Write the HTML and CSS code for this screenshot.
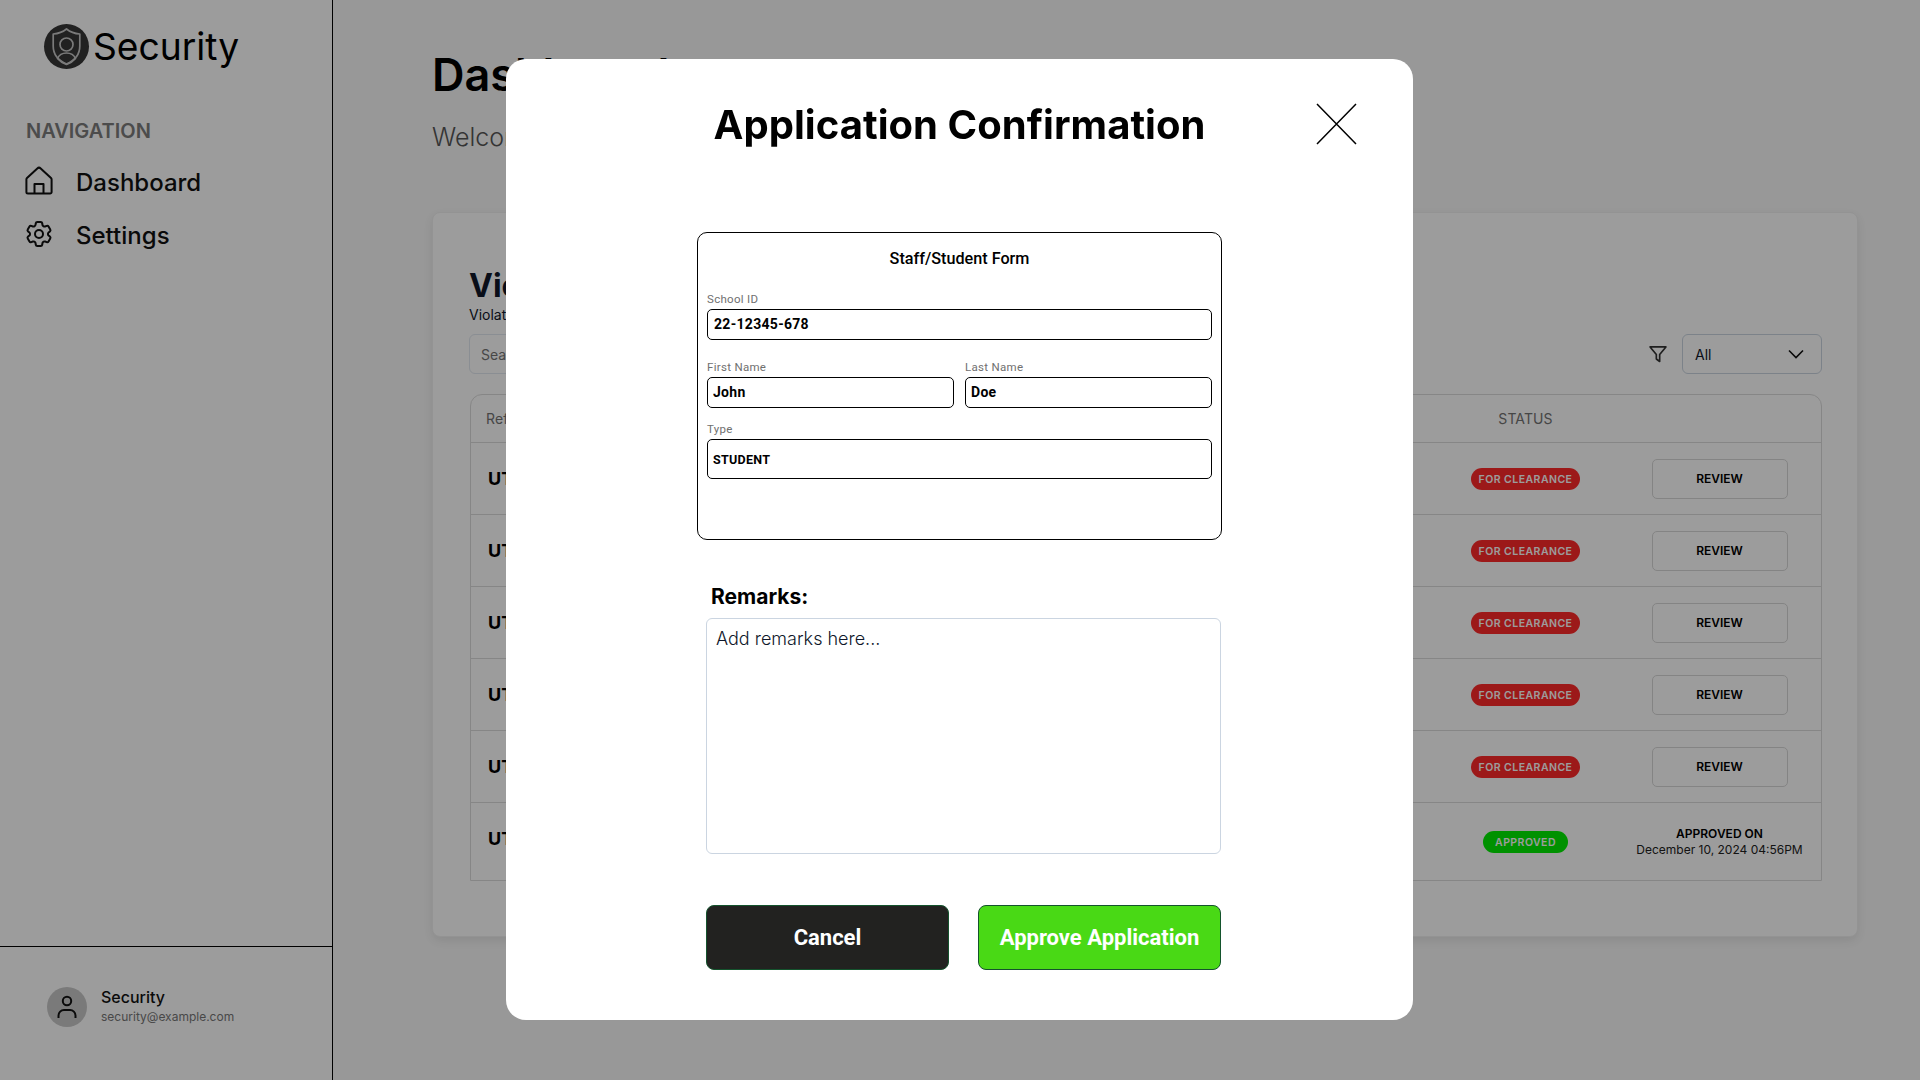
FILE: index.html

```html
<!DOCTYPE html>
<html lang="en">
<head>
  <meta charset="UTF-8" />
  <meta name="viewport" content="width=device-width, initial-scale=1.0"/>
  <title>Security Dashboard</title>
  <link rel="stylesheet" href="styles.css">
</head>
<body>

  <div class="app">
    <aside class="sidebar">
      <div class="brand">
        <span class="brand-mark">
          <svg viewBox="0 0 45 45" width="45" height="45" fill="none" stroke="#c8c8c8" stroke-width="1.700" stroke-linejoin="round">
            <path d="M22.500 5c3.700 3 8 4.600 13.300 5v12c0 8.900-5.300 14.600-13.300 18-8-3.400-13.300-9.100-13.300-18V10c5.300-.4 9.600-2 13.300-5z"/>
            <circle cx="22.500" cy="20.500" r="6.500"/>
            <path d="M13.500 34.500c1.500-3.600 5-5.500 9-5.500s7.500 1.900 9 5.500c-2.500 3-5.500 4.800-9 6-3.500-1.200-6.500-3-9-6z"/>
          </svg>
        </span>
        <span class="brand-name">Security</span>
      </div>

      <nav class="nav">
        <p class="nav-title">NAVIGATION</p>
        <a class="nav-item" href="#">
          <svg viewBox="0 1.500 32 32" width="32" height="32" fill="none" stroke="#111" stroke-width="2" stroke-linejoin="round">
            <path d="M4 13.500 14.300 3.900a2.500 2.500 0 0 1 3.400 0L28 13.500a2 2 0 0 1 .6 1.500v12.500a1.500 1.500 0 0 1-1.500 1.500H4.900a1.500 1.500 0 0 1-1.500-1.500V15a2 2 0 0 1 .6-1.500z"/>
            <path d="M11.500 29V19.500h9V29"/>
          </svg>
          Dashboard
        </a>
        <a class="nav-item" href="#">
          <svg viewBox="0 0.750 24 24" width="32" height="32" fill="none" stroke="#111" stroke-width="1.500" stroke-linejoin="round">
            <path d="M9.594 3.940c.09-.542.56-.94 1.110-.94h2.593c.55 0 1.020.398 1.110.94l.213 1.281c.063.374.313.686.645.87.074.04.147.083.22.127.325.196.72.257 1.075.124l1.217-.456a1.125 1.125 0 0 1 1.370.49l1.296 2.247a1.125 1.125 0 0 1-.26 1.431l-1.003.827c-.293.241-.438.613-.43.992a7.723 7.723 0 0 1 0 .255c-.008.378.137.75.43.991l1.004.827c.424.35.534.955.26 1.430l-1.298 2.247a1.125 1.125 0 0 1-1.369.491l-1.217-.456c-.355-.133-.75-.072-1.076.124a6.470 6.470 0 0 1-.22.128c-.331.183-.581.495-.644.869l-.213 1.281c-.09.543-.56.94-1.110.94h-2.594c-.55 0-1.019-.398-1.110-.94l-.213-1.281c-.062-.374-.312-.686-.644-.87a6.520 6.520 0 0 1-.22-.127c-.325-.196-.72-.257-1.076-.124l-1.217.456a1.125 1.125 0 0 1-1.369-.49l-1.297-2.247a1.125 1.125 0 0 1 .26-1.431l1.004-.827c.292-.24.437-.613.43-.991a6.932 6.932 0 0 1 0-.255c.007-.38-.138-.751-.43-.992l-1.004-.827a1.125 1.125 0 0 1-.26-1.430l1.297-2.247a1.125 1.125 0 0 1 1.370-.491l1.216.456c.356.133.751.072 1.076-.124.072-.044.146-.086.22-.128.332-.183.582-.495.644-.869l.214-1.280z"/>
            <circle cx="12" cy="12" r="3"/>
          </svg>
          Settings
        </a>
      </nav>

      <div class="user">
        <span class="avatar">
          <svg viewBox="0 0 24 24" width="24" height="24" fill="none" stroke="#111" stroke-width="2">
            <circle cx="12" cy="6" r="4.200"/>
            <path d="M3.500 23v-2.500a5.500 5.500 0 0 1 5.500-5.500h6a5.500 5.500 0 0 1 5.500 5.500V23"/>
          </svg>
        </span>
        <div>
          <p class="user-name">Security</p>
          <p class="user-mail">security@example.com</p>
        </div>
      </div>
    </aside>

    <main class="main">
      <h1>Dashboard</h1>
      <p class="welcome">Welcome back, Security</p>

      <section class="card">
        <h2>Violations</h2>
        <p class="card-sub">Violations list</p>

        <div class="tools">
          <input class="search" type="text" placeholder="Search" />
          <svg class="filter-icon" viewBox="0 0 24 24" width="20" height="20" fill="none" stroke="#333" stroke-width="2" stroke-linejoin="round">
            <path d="M2.500 3.500h19l-7.500 9v8.500l-4-3v-5.500z"/>
          </svg>
          <div class="select">
            All
            <svg viewBox="0 0 16 10" width="16" height="10" fill="none" stroke="#111" stroke-width="1.600"><path d="M1 1.500 8 8.500l7-7"/></svg>
          </div>
        </div>

        <div class="table">
          <div class="row head">
            <span>Reference</span>
            <span class="center">STATUS</span>
            <span></span>
          </div>
          <div class="row">
            <strong>UTV-0001</strong>
            <span class="center"><b class="badge red">FOR CLEARANCE</b></span>
            <span class="center"><button class="review">REVIEW</button></span>
          </div>
          <div class="row">
            <strong>UTV-0002</strong>
            <span class="center"><b class="badge red">FOR CLEARANCE</b></span>
            <span class="center"><button class="review">REVIEW</button></span>
          </div>
          <div class="row">
            <strong>UTV-0003</strong>
            <span class="center"><b class="badge red">FOR CLEARANCE</b></span>
            <span class="center"><button class="review">REVIEW</button></span>
          </div>
          <div class="row">
            <strong>UTV-0004</strong>
            <span class="center"><b class="badge red">FOR CLEARANCE</b></span>
            <span class="center"><button class="review">REVIEW</button></span>
          </div>
          <div class="row">
            <strong>UTV-0005</strong>
            <span class="center"><b class="badge red">FOR CLEARANCE</b></span>
            <span class="center"><button class="review">REVIEW</button></span>
          </div>
          <div class="row last">
            <strong>UTV-0006</strong>
            <span class="center"><b class="badge green">APPROVED</b></span>
            <span class="center approved"><b>APPROVED ON</b><br>December 10, 2024 04:56PM</span>
          </div>
        </div>
      </section>
    </main>
  </div>

  <!-- confirmation dialog sits over the whole page -->
  <div class="overlay">
    <div class="modal">
      <header class="modal-head">
        <h2>Application Confirmation</h2>
        <svg class="close" viewBox="0 0 41 42" width="41" height="42" fill="none" stroke="#000" stroke-width="1.500"><path d="M1 1l39 40M40 1 1 41"/></svg>
      </header>

      <form class="form-box">
        <h3>Staff/Student Form</h3>
        <label class="field id-field">School ID
          <input type="text" value="22-12345-678" readonly />
        </label>
        <div class="name-row">
          <label class="field">First Name
            <input type="text" value="John" readonly />
          </label>
          <label class="field">Last Name
            <input type="text" value="Doe" readonly />
          </label>
        </div>
        <label class="field type-field">Type
          <input type="text" value="STUDENT" readonly />
        </label>
      </form>

      <label class="remarks-label" for="remarks">Remarks:</label>
      <textarea class="remarks" id="remarks" placeholder="Add remarks here..."></textarea>

      <div class="actions">
        <button class="btn cancel">Cancel</button>
        <button class="btn approve">Approve Application</button>
      </div>
    </div>
  </div>

</body>
</html>
```

FILE: styles.css

```css
* {
  box-sizing: border-box;
}
body {
  font-family: 'Inter', sans-serif;
  background-color: #fff;
  color: #000;
  margin: 0;
  height: 1080px;
  overflow: hidden;
}
p, h1, h2, h3 {
  margin: 0;
}
.app {
  display: flex;
  height: 1080px;
}

/* sidebar */
.sidebar {
  width: 333px;
  flex: none;
  display: flex;
  flex-direction: column;
  background-color: #fff;
  border-right: 1px solid #000;
}
.brand {
  display: flex;
  align-items: center;
  gap: 4px;
  padding: 23px 0 0 44px;
}
.brand-mark {
  width: 45px;
  height: 45px;
  border-radius: 50%;
  background-color: #363636;
  display: flex;
}
.brand-name {
  font-size: 37.200px;
  line-height: 46px;
  margin-top: 1px;
  color: #000;
}
.nav {
  padding: 49px 0 0 23px;
  flex: 1;
}
.nav-title {
  font-size: 20px;
  line-height: 24px;
  font-weight: 600;
  color: #7c7c7c;
  padding-left: 3px;
  margin-bottom: 23px;
}
.nav-item {
  display: flex;
  align-items: center;
  gap: 21px;
  height: 32px;
  margin-bottom: 21px;
  font-size: 24px;
  font-weight: 500;
  color: #111;
  text-decoration: none;
}
.user {
  height: 134px;
  border-top: 1px solid #000;
  display: flex;
  align-items: center;
  gap: 14px;
  padding: 0 0 14px 47px;
}
.avatar {
  width: 40px;
  height: 40px;
  border-radius: 50%;
  background-color: #c8c8c8;
  display: flex;
  align-items: center;
  justify-content: center;
}
.user-name {
  font-size: 16px;
  line-height: 20px;
  font-weight: 500;
  color: #111;
}
.user-mail {
  font-size: 12px;
  line-height: 20px;
  color: #777;
}

/* page */
.main {
  flex: 1;
  background-color: #f8f8f8;
  padding: 49px 63px 0 99px;
}
.main h1 {
  font-size: 45px;
  line-height: 52px;
  font-weight: 600;
}
.welcome {
  font-size: 25px;
  line-height: 30px;
  font-weight: 300;
  color: #555;
  margin-top: 21px;
}
.card {
  margin-top: 60px;
  height: 725px;
  padding: 55px 35px 0 36px;
  background-color: #fff;
  border-radius: 8px;
  border: 1px solid #f0f0f0;
  box-shadow: 0 4px 10px rgba(0, 0, 0, 0.08);
}
.card h2 {
  font-size: 32px;
  line-height: 36px;
  font-weight: 700;
  color: #0f172a;
}
.card-sub {
  font-size: 14px;
  line-height: 20px;
  color: #0f172a;
  margin-top: 1px;
}
.tools {
  display: flex;
  align-items: center;
  margin-top: 9px;
}
.search {
  width: 400px;
  margin-right: auto;
  height: 40px;
  padding: 0 11px;
  font: 14px 'Inter', sans-serif;
  border: 1px solid #e2e8f0;
  border-radius: 6px;
}
.filter-icon {
  margin-left: 14px;
}
.select {
  width: 140px;
  height: 40px;
  margin-left: 14px;
  padding: 0 17px 0 12px;
  display: flex;
  align-items: center;
  justify-content: space-between;
  font-size: 14px;
  color: #0f172a;
  border: 1px solid #cbd5e1;
  border-radius: 6px;
}
.table {
  margin: 20px 0 0 1px;
  width: 1352px;
  border: 1px solid #dcdcdc;
  border-radius: 12px 12px 0 0;
}
.row {
  display: grid;
  grid-template-columns: 1fr 185px 203px;
  align-items: center;
  height: 72px;
  padding-left: 17px;
  border-top: 1px solid #dcdcdc;
  font-size: 18px;
}
.row.head {
  height: 47px;
  border-top: 0;
  padding-left: 15px;
  font-size: 14px;
  letter-spacing: 0.1px;
  color: #737373;
}
.row.last {
  height: 78px;
}
.row.last strong {
  margin-bottom: 7px;
}
.center {
  text-align: center;
}
.badge {
  display: inline-block;
  padding: 1px 8px 0;
  line-height: 21px;
  font-size: 10.500px;
  font-weight: 600;
  letter-spacing: 0.45px;
  color: #fff;
  border-radius: 11px;
  vertical-align: middle;
}
.badge.red {
  background-color: #ff2a2a;
}
.badge.green {
  background-color: #00ee00;
  padding: 1px 12px 0;
}
.review {
  width: 136px;
  height: 40px;
  font: 600 12px 'Inter', sans-serif;
  color: #000;
  background: #fff;
  border: 1px solid #d8d8d8;
  border-radius: 5px;
}
.approved {
  font-size: 12px;
  line-height: 16px;
  color: #222;
}
.approved b {
  font-weight: 600;
  color: #000;
}

/* dialog */
.overlay {
  position: fixed;
  inset: 0;
  background-color: rgba(0, 0, 0, 0.39);
  display: flex;
  align-items: center;
  justify-content: center;
}
.modal {
  width: 907px;
  height: 961px;
  background-color: #fff;
  border-radius: 20px;
  padding: 0 191px;
  margin: -2px 0 0 -1px;
  display: flex;
  flex-direction: column;
}
.modal-head {
  height: 173px;
  padding-top: 38px;
  position: relative;
}
.modal-head h2 {
  font-size: 40px;
  line-height: 56px;
  font-weight: 700;
  letter-spacing: 0.05px;
  text-align: center;
  white-space: nowrap;
}
.close {
  position: absolute;
  left: 619px;
  top: 44px;
}
.form-box {
  width: 525px;
  height: 308px;
  padding: 15px 9px 0 9px;
  border: 1px solid #000;
  border-radius: 10px;
  font-family: 'Roboto', sans-serif;
}
.form-box h3 {
  font-size: 16.200px;
  line-height: 22px;
  font-weight: 500;
  text-align: center;
}
.field {
  display: block;
  flex: 1;
  font-size: 11.500px;
  line-height: 14px;
  letter-spacing: 0.3px;
  color: #707070;
}
.field input {
  display: block;
  width: 100%;
  height: 31px;
  margin-top: 3px;
  padding: 0 5px;
  font: 700 14px 'Roboto', sans-serif;
  letter-spacing: 0.3px;
  color: #000;
  border: 1px solid #000;
  border-radius: 5px;
  outline: none;
}
.id-field {
  margin-top: 22px;
}
.id-field input {
  padding-left: 6px;
}
.name-row {
  display: flex;
  gap: 11px;
  margin-top: 20px;
}
.type-field {
  margin-top: 14px;
}
.type-field input {
  height: 40px;
  padding-top: 2px;
  font-size: 12.500px;
}
.remarks-label {
  font-size: 21px;
  line-height: 26px;
  font-weight: 700;
  margin: 44px 0 8px 14px;
}
.remarks {
  display: block;
  width: 515px;
  height: 236px;
  margin-left: 9px;
  padding: 9px;
  font: 300 18px 'Inter', sans-serif;
  border: 1px solid #cbd5e1;
  border-radius: 6px;
  resize: none;
  outline: none;
}
.remarks::placeholder {
  color: #0f172a;
  opacity: 1;
}
.actions {
  display: flex;
  justify-content: space-between;
  width: 515px;
  margin: 51px 0 0 9px;
}
.btn {
  width: 243px;
  height: 65px;
  font: 700 22px 'Roboto', sans-serif;
  color: #fff;
  border: 1px solid #14532d;
  border-radius: 8px;
}
.btn.cancel {
  background-color: #222220;
}
.btn.approve {
  background-color: #49d915;
}
```
